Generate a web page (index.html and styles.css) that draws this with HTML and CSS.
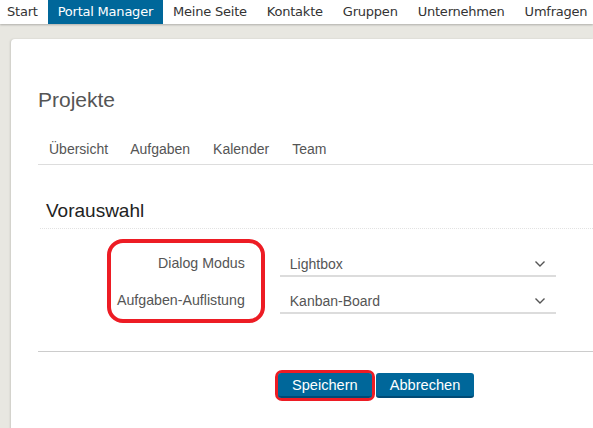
FILE: index.html
```html
<!DOCTYPE html>
<html lang="de">
<head>
<meta charset="utf-8">
<link rel="stylesheet" href="styles.css">
</head>
<body>
<nav class="topnav">
  <a class="nav-item first">Start</a>
  <a class="nav-item active">Portal Manager</a>
  <a class="nav-item">Meine Seite</a>
  <a class="nav-item">Kontakte</a>
  <a class="nav-item">Gruppen</a>
  <a class="nav-item">Unternehmen</a>
  <a class="nav-item">Umfragen</a>
</nav>
<main class="card">
  <h1 class="title">Projekte</h1>
  <ul class="tabs">
    <li>Übersicht</li>
    <li>Aufgaben</li>
    <li>Kalender</li>
    <li>Team</li>
  </ul>
  <h2 class="section">Vorauswahl</h2>
  <div class="form">
    <div class="labels-wrap">
      <div class="labels">
        <label>Dialog Modus</label>
        <label>Aufgaben-Auflistung</label>
      </div>
    </div>
    <div class="selects">
      <div class="select"><span>Lightbox</span><svg width="12" height="8" viewBox="0 0 12 8"><path d="M1.5 1.5 L6 6 L10.5 1.5" fill="none" stroke="#555" stroke-width="1.4"/></svg></div>
      <div class="select"><span>Kanban-Board</span><svg width="12" height="8" viewBox="0 0 12 8"><path d="M1.5 1.5 L6 6 L10.5 1.5" fill="none" stroke="#555" stroke-width="1.4"/></svg></div>
    </div>
  </div>
  <hr class="divider">
  <div class="actions">
    <span class="highlight"><button class="btn">Speichern</button></span>
    <button class="btn">Abbrechen</button>
  </div>
</main>
</body>
</html>
```
FILE: styles.css
```css
html, body { margin: 0; padding: 0; }
body {
  background: #e8e7e1;
  width: 593px;
  height: 428px;
  overflow: hidden;
  font-family: "Liberation Sans", Arial, sans-serif;
}
.topnav {
  display: flex;
  height: 24px;
  background: #fff;
  box-shadow: 0 1px 2px rgba(0,0,0,0.25);
  position: relative;
  z-index: 1;
}
.nav-item {
  font-family: "DejaVu Sans", Verdana, sans-serif;
  font-size: 13px;
  color: #333;
  line-height: 24px;
  padding: 0 10px;
  white-space: nowrap;
  letter-spacing: -0.22px;
}
.nav-item.first { padding-left: 7px; }
.nav-item.active {
  background: #00679a;
  color: #fff;
}
.card {
  background: #fff;
  margin: 15px 0 0 11px;
  height: 380px;
  border-radius: 4px 0 0 0;
  box-shadow: -1px 0 2px rgba(0,0,0,0.12);
  padding: 49px 0 0 27px;
}
.title {
  margin: 0;
  font-weight: normal;
  font-size: 21px;
  color: #555;
  line-height: 24px;
}
.tabs {
  list-style: none;
  margin: 26px 0 0 0;
  padding: 0 0 4px 11px;
  display: flex;
  gap: 22px;
  border-bottom: 1px solid #ddd;
  font-size: 14px;
  color: #555;
  line-height: 22px;
}
.tabs li:nth-child(3) { margin-left: 1px; }
.tabs li:nth-child(4) { margin-left: 1px; }
.section {
  margin: 35px 0 0 2px;
  padding: 0 0 6px 6px;
  font-weight: normal;
  font-size: 19px;
  color: #222;
  line-height: 22px;
  border-bottom: 1px dotted #e2e2e2;
}
.form {
  display: flex;
  margin-top: 10px;
}
.labels-wrap {
  margin-left: 69px;
  border: 4px solid #ed1c24;
  border-radius: 16px;
  padding: 10px 16px 9px 6px;
}
.labels {
  display: flex;
  flex-direction: column;
  align-items: flex-end;
  gap: 17px;
  font-size: 14.2px;
  color: #555;
  line-height: 20px;
}
.selects {
  margin-left: 15px;
  margin-top: 13px;
  display: flex;
  flex-direction: column;
  gap: 12px;
}
.select {
  width: 256px;
  height: 23px;
  padding: 0 10px;
  display: flex;
  justify-content: space-between;
  align-items: center;
  border-bottom: 2px solid #dcdcdc;
  font-size: 14px;
  color: #555;
}
.divider {
  margin: 28px 0 0 0;
  border: 0;
  border-top: 1px solid #ccc;
}
.actions {
  display: flex;
  align-items: center;
  margin: 18px 0 0 237px;
  gap: 1px;
}
.highlight {
  border: 3px solid #ed1c24;
  border-radius: 7px;
  display: inline-flex;
}
.btn {
  font-family: "Liberation Sans", Arial, sans-serif;
  font-size: 14.6px;
  color: #fff;
  background: #00679a;
  border: 0;
  border-bottom: 2px solid #004a75;
  border-radius: 3px;
  height: 25px;
  padding: 0 14px;
}
```
